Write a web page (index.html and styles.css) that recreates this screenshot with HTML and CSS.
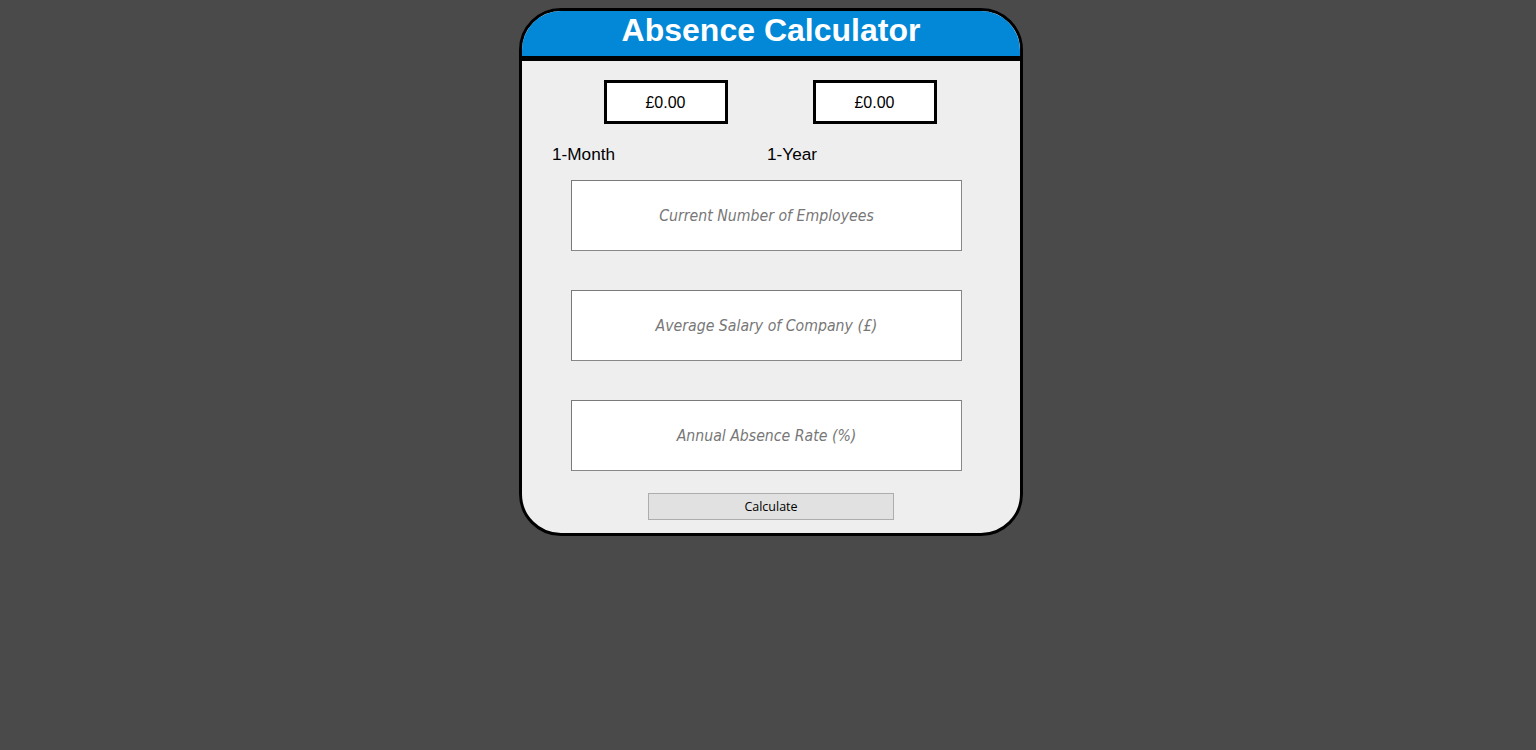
FILE: index.html
```html
<!DOCTYPE html>
<html lang="en">
<head>
<meta charset="utf-8">
<title>Absence Calculator</title>
<link rel="stylesheet" href="styles.css">
</head>
<body>
<div class="page">
  <div class="card">
    <div class="header">Absence Calculator</div>
    <div class="results">
      <div class="result">£0.00</div>
      <div class="result">£0.00</div>
    </div>
    <div class="labels">
      <span class="label label-month">1-Month</span>
      <span class="label">1-Year</span>
    </div>
    <div class="fields">
      <input class="field" type="text" placeholder="Current Number of Employees">
      <input class="field" type="text" placeholder="Average Salary of Company (£)">
      <input class="field" type="text" placeholder="Annual Absence Rate (%)">
    </div>
    <div class="actions">
      <button class="calc" type="button">Calculate</button>
    </div>
  </div>
</div>
</body>
</html>
```
FILE: styles.css
```css
html, body {
  margin: 0;
  padding: 0;
  background: #4a4a4a;
  height: 100%;
}
.page {
  display: flex;
  justify-content: center;
  padding: 8px 0 0 6px;
}
.card {
  width: 498px;
  border: 3px solid #000;
  border-radius: 42px;
  background: #eeeeee;
  overflow: hidden;
  padding-bottom: 13px;
  font-family: "Liberation Sans", Arial, sans-serif;
}
.header {
  height: 45px;
  line-height: 39px;
  background: #0288d6;
  border-bottom: 5px solid #000;
  color: #fff;
  font-weight: bold;
  font-size: 32px;
  text-align: center;
}
.results {
  display: flex;
  justify-content: center;
  gap: 85px;
  margin-top: 19px;
  padding-right: 2px;
}
.result {
  width: 118px;
  height: 38px;
  border: 3px solid #000;
  background: #fff;
  font-size: 16px;
  line-height: 39px;
  text-align: center;
  color: #000;
}
.labels {
  display: flex;
  margin-top: 20px;
  padding-left: 30px;
  font-size: 17.2px;
  line-height: 20px;
  color: #000;
}
.label-month {
  width: 215px;
}
.fields {
  display: flex;
  flex-direction: column;
  gap: 39px;
  margin-top: 16px;
  padding-left: 49px;
}
.field {
  box-sizing: border-box;
  width: 391px;
  height: 71px;
  margin: 0;
  border: 1px solid #888;
  border-top-color: #7a7a7a;
  border-left-color: #7a7a7a;
  background: #fff;
  text-align: center;
  font-family: "DejaVu Sans Condensed", "DejaVu Sans", sans-serif;
  font-style: italic;
  font-size: 15.7px;
  color: #000;
  outline: none;
}
.field::placeholder {
  color: #777;
  opacity: 1;
}
.actions {
  display: flex;
  justify-content: center;
  margin-top: 22px;
}
.calc {
  box-sizing: border-box;
  width: 246px;
  height: 27px;
  margin: 0;
  padding: 0;
  border: 1px solid #adadad;
  background: #e1e1e1;
  color: #000;
  font-family: "Open Sans", sans-serif;
  font-size: 12.5px;
}
```
